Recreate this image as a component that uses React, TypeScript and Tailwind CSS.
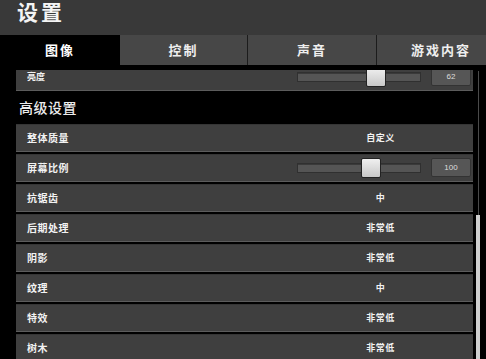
import React from 'react';

const tabs = [
  { name: '图像', w: 'w-[120px]' },
  { name: '控制', w: 'w-[128px]' },
  { name: '声音', w: 'w-[129px]' },
  { name: '游戏内容', w: 'w-[129px]' },
];

const rows: { label: string; value?: string; slider?: number }[] = [
  { label: '整体质量', value: '自定义' },
  { label: '屏幕比例', slider: 100 },
  { label: '抗锯齿', value: '中' },
  { label: '后期处理', value: '非常低' },
  { label: '阴影', value: '非常低' },
  { label: '纹理', value: '中' },
  { label: '特效', value: '非常低' },
  { label: '树木', value: '非常低' },
];

const Slider = ({ value, thumb }: { value: number; thumb: number }) => (
  <div className="flex items-center w-[174px]">
    <div className="relative w-[124px] h-[10px] bg-[#555] border border-[#303030] shadow-[inset_0_1px_0_#3a3a3a]">
      {/* thumb sits over the track */}
      <div
        className="absolute top-[-6px] w-[20px] h-[20px] bg-gradient-to-b from-[#f0f0f0] to-[#c8c8c8] border border-[#222] rounded-[2px]"
        style={{ left: thumb }}
      />
    </div>
    <div className="ml-[10px] w-[40px] h-[19px] flex items-center justify-center bg-[#565656] border border-[#333] rounded-[2px] text-[8px] text-[#ddd] font-['Liberation_Sans',sans-serif]">
      {value}
    </div>
  </div>
);

const Row = ({ label, value, slider }: { label: string; value?: string; slider?: number }) => (
  <div className="h-[28px] flex items-center bg-[#3f3f3f] border-b border-[#5c5c5c] shadow-[inset_0_1px_0_#353535]">
    <span className="pl-[11px] flex-1 text-[10px] font-bold tracking-[0.5px] text-[#f2f2f2]">{label}</span>
    {slider !== undefined ? (
      <div className="mr-[2px]">
        <Slider value={slider} thumb={63} />
      </div>
    ) : (
      <div className="w-[174px] mr-[2px] pr-[7px] text-center text-[9px] font-bold tracking-[0.5px] text-[#f2f2f2]">
        {value}
      </div>
    )}
  </div>
);

export default function App() {
  return (
    <div className="w-[486px] h-[359px] overflow-hidden bg-black font-['Noto_Sans_CJK_SC',sans-serif] select-none">
      <header className="h-[35px] bg-[#393939] pl-[17px]">
        <h1 className="text-[21px] leading-[23px] font-bold tracking-[3px] text-[#f4f4f4]">设置</h1>
      </header>

      <nav className="h-[30px] flex">
        {tabs.map((t, i) => (
          <div
            key={t.name}
            className={`${t.w} shrink-0 flex items-center justify-center text-[13px] font-bold tracking-[2px] ${
              i === 0 ? 'bg-black text-white' : 'bg-[#474747] text-[#eee] border-r border-[#1c1c1c]'
            }`}
          >
            {t.name}
          </div>
        ))}
      </nav>

      <div className="flex pt-[5px]">
        <div className="ml-[16px] w-[457px]">
          <div className="h-[21px] overflow-hidden">
            <div className="-mt-[7px] h-[28px] flex items-center bg-[#3f3f3f] border-b border-[#5c5c5c]">
              <span className="pl-[11px] flex-1 text-[9px] font-bold text-[#f2f2f2]">亮度</span>
              <div className="mr-[2px]">
                <Slider value={62} thumb={68} />
              </div>
            </div>
          </div>

          <h2 className="h-[33px] flex items-center pl-[3px] text-[14px] font-medium tracking-[0.5px] text-[#ececec]">高级设置</h2>

          <div className="flex flex-col gap-[2px]">
            {rows.map((r) => (
              <Row key={r.label} {...r} />
            ))}
          </div>
        </div>

        <div className="relative ml-[3px] w-[4px] mt-[1px]">
          <div className="mx-auto w-[1px] h-full bg-[#4a4a4a]" />
          <div className="absolute left-0 top-[144px] w-[4px] h-[200px] bg-[#cfcfcf]" />
        </div>
      </div>
    </div>
  );
}
